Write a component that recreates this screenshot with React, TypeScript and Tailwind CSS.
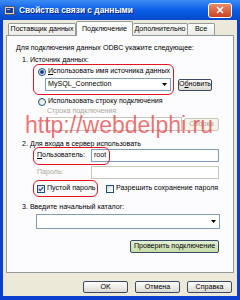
import React from "react";

function Radio({ checked }: { checked?: boolean }) {
  return (
    <span className="w-[8px] h-[8px] rounded-full border border-[#1c5180] bg-gradient-to-br from-[#dcdcd6] to-white flex items-center justify-center shrink-0">
      {checked && <span className="w-[4px] h-[4px] rounded-full bg-[#1a3f8f]" />}
    </span>
  );
}

function Check({ checked }: { checked?: boolean }) {
  return (
    <span className="w-[8px] h-[8px] border border-[#1c5180] bg-gradient-to-br from-[#dcdcd6] to-white flex items-center justify-center shrink-0">
      {checked && (
        <svg width="6" height="6" viewBox="0 0 6 6">
          <path d="M0.8 3 L2.3 4.6 L5.2 1.2" fill="none" stroke="#2a46a8" strokeWidth="1.2" />
        </svg>
      )}
    </span>
  );
}

function Arrow() {
  return (
    <svg width="5" height="3" viewBox="0 0 5 3" className="shrink-0">
      <path d="M0 0 L5 0 L2.5 3 Z" fill="#000" />
    </svg>
  );
}

function Btn({ children, className = "" }: { children: React.ReactNode; className?: string }) {
  return (
    <div className={`flex items-center justify-center rounded-[2px] border border-[#3c4a6a] bg-gradient-to-b from-white to-[#dcdad0] shrink-0 ${className}`}>
      {children}
    </div>
  );
}

export default function App() {
  return (
    <div className="w-[240px] h-[300px] bg-[#0a3fd0] flex flex-col relative overflow-hidden font-['Liberation_Sans',Arial,sans-serif] text-[7.1px] leading-[9px] text-black">
      {/* title bar */}
      <div className="h-[20px] shrink-0 flex items-center bg-gradient-to-b from-[#3b8cf5] via-[#0a5fe8] to-[#0648c9] px-[3px]">
        <svg width="11" height="11" viewBox="0 0 11 11" className="ml-[1px] shrink-0">
          <rect x="0.5" y="1.5" width="10" height="8" fill="#d8d8d8" stroke="#555" />
          <rect x="2" y="3" width="7" height="5" fill="#1f3c9a" />
          <rect x="3" y="4" width="3" height="1" fill="#8fb4ff" />
        </svg>
        <span className="ml-[4px] text-white font-bold text-[8.4px] leading-[10px] [text-shadow:1px_1px_#0a1e6e] whitespace-nowrap">
          Свойства связи с данными
        </span>
        <div className="ml-auto mr-[5px] w-[24px] h-[15px] rounded-[3px] border border-white bg-gradient-to-b from-[#e88a6c] to-[#c9401f] flex items-center justify-center">
          <svg width="8" height="8" viewBox="0 0 8 8">
            <path d="M1 1 L7 7 M7 1 L1 7" stroke="#fff" strokeWidth="1.6" />
          </svg>
        </div>
      </div>

      {/* body */}
      <div className="flex-1 mx-[3px] mb-[4px] bg-[#ece9d8] flex flex-col">
        {/* tabs */}
        <div className="h-[14px] mt-[1px] pl-[5px] flex items-end">
          <div className="w-[68px] h-[12px] border border-b-0 border-[#919b9c] rounded-t-[2px] bg-gradient-to-b from-white to-[#ecebe5] flex items-center justify-center whitespace-nowrap">
            Поставщик данных
          </div>
          <div className="w-[57px] h-[15px] -mb-[1px] relative z-10 border border-b-0 border-[#919b9c] rounded-t-[2px] bg-[#fcfcfe] flex items-center justify-center whitespace-nowrap">
            Подключение
          </div>
          <div className="w-[55px] h-[12px] border border-b-0 border-l-0 border-[#919b9c] rounded-t-[2px] bg-gradient-to-b from-white to-[#ecebe5] flex items-center justify-center whitespace-nowrap">
            Дополнительно
          </div>
          <div className="w-[27px] h-[12px] border border-b-0 border-l-0 border-[#919b9c] rounded-t-[2px] bg-gradient-to-b from-white to-[#ecebe5] flex items-center justify-center whitespace-nowrap">
            Все
          </div>
        </div>

        {/* panel */}
        <div className="h-[238px] mx-[3px] border border-[#919b9c] bg-[#fcfcfe] flex flex-col whitespace-nowrap">
          <div className="mt-[8px] h-[9px] pl-[9px]">Для подключения данных ODBC укажите следующее:</div>
          <div className="mt-[3px] h-[9px] pl-[15px]">1. Источник данных:</div>
          <div className="mt-[2px] h-[9px] pl-[31px] flex items-center gap-[2px]">
            <Radio checked />
            <span>
              <span className="underline">И</span>спользовать имя источника данных
            </span>
          </div>
          <div className="mt-[2px] h-[13px] flex items-center">
            <div className="ml-[38px] w-[126px] h-[13px] border border-[#7f9db9] bg-white flex items-center pl-[2px] pr-[3px]">
              <span className="flex-1">MySQL_Connection</span>
              <Arrow />
            </div>
            <Btn className="ml-[7px] w-[34px] h-[12px]">
              О<span className="underline">б</span>новить
            </Btn>
          </div>
          <div className="mt-[6px] h-[9px] pl-[31px] flex items-center gap-[2px]">
            <Radio />
            <span>Использовать строку подключения</span>
          </div>
          <div className="mt-[1px] h-[9px] pl-[40px] text-[#aca899]">Строка подключения:</div>
          <div className="mt-[1px] h-[14px] flex items-center">
            <div className="ml-[40px] w-[135px] h-[14px] border border-[#c9c7ba] bg-white" />
            <div className="ml-[2px] w-[35px] h-[13px] rounded-[2px] border border-[#c9c7ba] bg-[#f5f4ea] text-[#aca899] flex items-center justify-center">
              Сборка
            </div>
          </div>
          <div className="mt-[9px] h-[9px] pl-[15px]">2. Для входа в сервер использовать</div>
          <div className="h-[13px] flex items-center">
            <span className="pl-[30px] w-[84px]">
              <span className="underline">П</span>ользователь:
            </span>
            <div className="w-[128px] h-[13px] border border-[#7f9db9] bg-white flex items-center pl-[2px]">root</div>
          </div>
          <div className="mt-[4px] h-[13px] flex items-center">
            <span className="pl-[30px] w-[84px] text-[#aca899]">Пароль:</span>
            <div className="w-[128px] h-[13px] border border-[#c9c7ba] bg-white" />
          </div>
          <div className="mt-[5px] h-[9px] flex items-center">
            <div className="pl-[30px] w-[99px] flex items-center gap-[2px]">
              <Check checked />
              <span>Пустой пароль</span>
            </div>
            <div className="flex items-center gap-[2px]">
              <Check />
              <span>Разрешить сохранение пароля</span>
            </div>
          </div>
          <div className="mt-[10px] h-[9px] pl-[15px]">3. Введите начальный каталог:</div>
          <div className="mt-[2px] h-[15px] flex">
            <div className="ml-[29px] w-[184px] h-[15px] border border-[#7f9db9] bg-white flex items-center justify-end pr-[3px]">
              <Arrow />
            </div>
          </div>
          <div className="mt-[11px] h-[13px] flex">
            <div className="ml-[123px] w-[89px] h-[13px] rounded-[2px] border border-[#3c4a6a] bg-gradient-to-b from-[#e4efd4] to-[#c6dca8] flex items-center justify-center">
              Проверить подключение
            </div>
          </div>
        </div>

        {/* buttons */}
        <div className="mt-[8px] h-[12px] flex justify-end gap-[7px] pr-[5px]">
          <Btn className="w-[45px] h-[12px]">OK</Btn>
          <Btn className="w-[45px] h-[12px]">Отмена</Btn>
          <Btn className="w-[45px] h-[12px]">Справка</Btn>
        </div>
      </div>

      {/* annotations */}
      <div className="absolute left-[33px] top-[64px] w-[141px] h-[31px] border-[1.5px] border-[#e3141e] rounded-[6px]" />
      <div className="absolute left-[33px] top-[147px] w-[77px] h-[18px] border-[1.5px] border-[#e3141e] rounded-[6px]" />
      <div className="absolute left-[33px] top-[180px] w-[65px] h-[17px] border-[1.5px] border-[#e3141e] rounded-[6px]" />
      <div className="absolute left-[25px] top-[114px] text-[23px] leading-[23px] text-[#e4353a]/70 whitespace-nowrap">
        http://webdelphi.ru
      </div>
    </div>
  );
}
